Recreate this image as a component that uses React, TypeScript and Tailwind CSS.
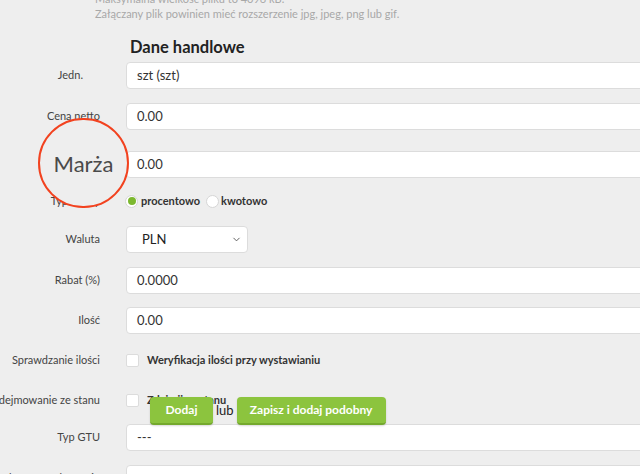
import { ChevronDown } from 'lucide-react'

const font = { fontFamily: 'Lato, "Open Sans", sans-serif' }

function Label({ text, className = '' }: { text: string; className?: string }) {
  return (
    <div className={`w-[100px] shrink-0 flex justify-end whitespace-nowrap text-[11px] text-[#444] ${className}`}>
      <span>{text}</span>
    </div>
  )
}

function InputRow({ label, value, top, labelClass }: { label: string; value: string; top: string; labelClass?: string }) {
  return (
    <div className={`flex items-center ${top}`}>
      <Label text={label} className={labelClass} />
      <div className="ml-[26px] h-[27px] w-[540px] shrink-0 rounded-[4px] border border-[#dcdcdc] bg-white pl-[10px] flex items-center text-[13px] text-[#333]">
        {value}
      </div>
    </div>
  )
}

function Checkbox() {
  return <span className="block h-[13px] w-[13px] rounded-[2px] border border-[#dcdcdc] bg-white" />
}

export default function App() {
  return (
    <div className="relative h-[474px] w-[640px] overflow-hidden bg-[#eeeeee]" style={font}>
      <div className="-mt-[9px] pl-[95px] text-[11px] leading-[15px] text-[#a8a8a8]">
        <p>Maksymalna wielkość pliku to 4096 kB.</p>
        <p>Załączany plik powinien mieć rozszerzenie jpg, jpeg, png lub gif.</p>
      </div>

      <h2 className="mt-[16px] pl-[130px] text-[16.5px] font-bold leading-[20px] text-[#222]">Dane handlowe</h2>

      <InputRow label="Jedn." value="szt (szt)" top="mt-[5px]" labelClass="pr-[17px]" />
      <InputRow label="Cena netto" value="0.00" top="mt-[14px]" />
      <InputRow label="Marża" value="0.00" top="mt-[21px]" />

      <div className="mt-[16px] flex h-[14px] items-center">
        <Label text="Typ marży" />
        <div className="ml-[25px] flex items-center text-[11px] font-bold text-[#333]">
          <span className="flex h-[13px] w-[13px] items-center justify-center rounded-full border border-[#d6d6d6] bg-white">
            <span className="h-[8px] w-[8px] rounded-full bg-[#7cb82f]" />
          </span>
          <span className="ml-[3px]">procentowo</span>
          <span className="ml-[6px] h-[13px] w-[13px] rounded-full border border-[#d6d6d6] bg-white" />
          <span className="ml-[2px]">kwotowo</span>
        </div>
      </div>

      <div className="mt-[18px] flex items-center">
        <Label text="Waluta" />
        <div className="ml-[26px] flex h-[27px] w-[122px] items-center justify-between rounded-[4px] border border-[#dcdcdc] bg-white pl-[15px] pr-[5px] text-[13px] text-[#222]">
          <span>PLN</span>
          <ChevronDown size={11} strokeWidth={2} className="text-[#555]" />
        </div>
      </div>

      <InputRow label="Rabat (%)" value="0.0000" top="mt-[14px]" />
      <InputRow label="Ilość" value="0.00" top="mt-[13px]" />

      <div className="mt-[19px] flex h-[14px] items-center">
        <Label text="Sprawdzanie ilości" />
        <div className="ml-[26px] flex items-center text-[11px] font-bold text-[#333]">
          <Checkbox />
          <span className="ml-[8px]">Weryfikacja ilości przy wystawianiu</span>
        </div>
      </div>

      <div className="mt-[26px] flex h-[14px] items-center">
        <Label text="Zdejmowanie ze stanu" />
        <div className="ml-[26px] flex items-center text-[11px] font-bold text-[#333]">
          <Checkbox />
          <span className="ml-[8px]">Zdejmij ze stanu</span>
        </div>
      </div>

      <InputRow label="Typ GTU" value="---" top="mt-[17px]" />
      <InputRow label="Ilość w opakowaniu" value="" top="mt-[14px]" />

      {/* floating action bar */}
      <div className="absolute left-[150px] top-[397px] flex items-center text-[13px] text-[#222]">
        <button className="h-[28px] w-[63px] rounded-[4px] border-b-2 border-[#74a92d] bg-[#8cc43e] text-[12px] font-bold text-white shadow-[0_1px_2px_rgba(0,0,0,0.15)]">
          Dodaj
        </button>
        <span className="ml-[3px] mr-[3px]">lub</span>
        <button className="h-[28px] w-[149px] rounded-[4px] border-b-2 border-[#74a92d] bg-[#8cc43e] text-[12px] font-bold text-white shadow-[0_1px_2px_rgba(0,0,0,0.15)]">
          Zapisz i dodaj podobny
        </button>
      </div>

      {/* annotation circle */}
      <div className="absolute left-[38px] top-[118px] flex h-[90px] w-[91px] items-center justify-center rounded-full border-2 border-[#f2421f] bg-[#eeeeee]">
        <span className="text-[22px] text-[#4a4a4a]">Marża</span>
      </div>
    </div>
  )
}
